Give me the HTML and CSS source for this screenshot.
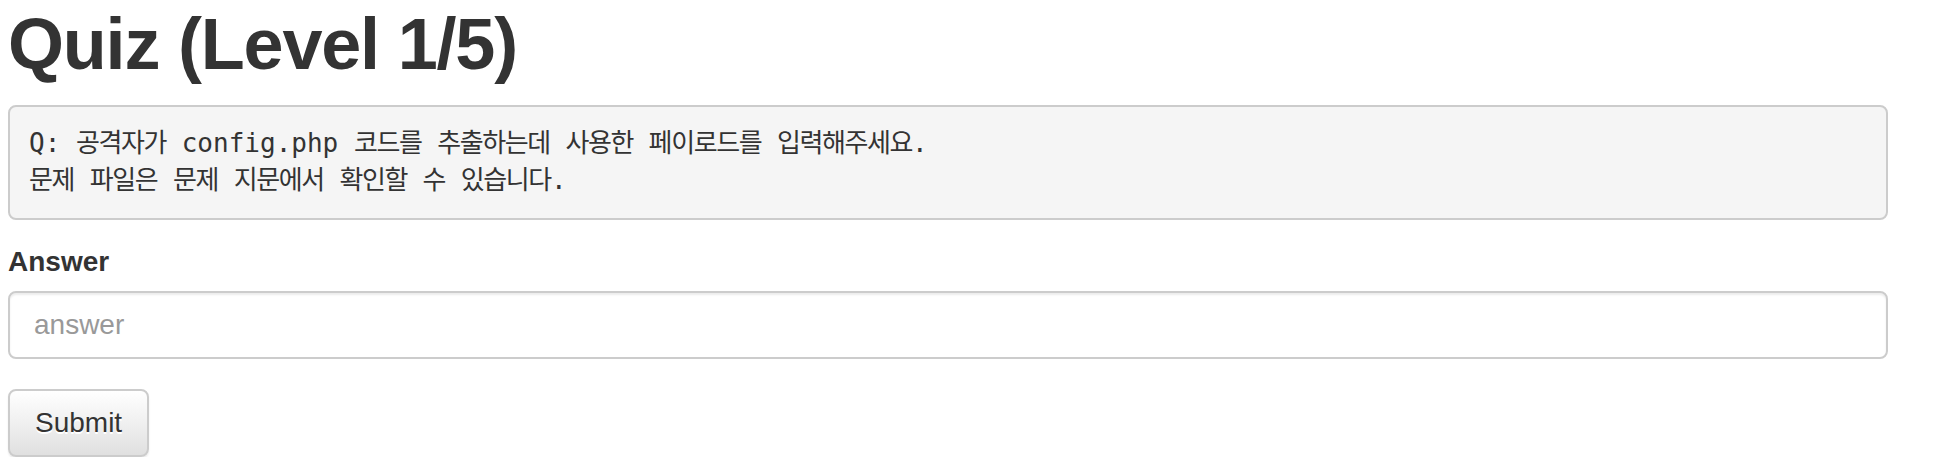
FILE: index.html
```html
<!DOCTYPE html>
<html lang="ko">
<head>
<meta charset="utf-8">
<title>Quiz</title>
<link rel="stylesheet" href="styles.css">
</head>
<body>
<div class="container">
  <h1 class="title">Quiz (Level 1/5)</h1>
  <pre class="question">Q: <span class="ko">공격자가</span> config.php <span class="ko">코드를</span> <span class="ko">추출하는데</span> <span class="ko">사용한</span> <span class="ko">페이로드를</span> <span class="ko">입력해주세요</span>.
<span class="ko">문제</span> <span class="ko">파일은</span> <span class="ko">문제</span> <span class="ko">지문에서</span> <span class="ko">확인할</span> <span class="ko">수</span> <span class="ko">있습니다</span>.</pre>
  <form class="quiz-form" onsubmit="return false;">
    <div class="form-group">
      <label class="label" for="answer">Answer</label>
      <input class="input" id="answer" type="text" placeholder="answer">
    </div>
    <button class="btn" type="submit">Submit</button>
  </form>
</div>
</body>
</html>
```

FILE: styles.css
```css
html, body {
  margin: 0;
  padding: 0;
  background: #fff;
}

body {
  font-family: "Liberation Sans", Arial, sans-serif;
  color: #333;
  font-size: 28px;
  line-height: 40px;
}

.container {
  width: 1880px;
  margin-left: 8px;
}

.title {
  margin: 5px 0 21px;
  font-size: 72px;
  line-height: 79px;
  font-weight: 700;
  letter-spacing: -1.2px;
  color: #333;
}

.question {
  margin: 0 0 22px;
  padding: 18px 19px 19px;
  background: #f5f5f5;
  border: 2px solid #ccc;
  border-radius: 8px;
  font-family: "DejaVu Sans Mono", "Noto Sans CJK KR", monospace;
  font-size: 26px;
  line-height: 37px;
  color: #333;
  white-space: pre-wrap;
}

.ko {
  font-family: "Noto Sans CJK KR", sans-serif;
  line-height: 26px;
  letter-spacing: -1.4px;
}

.quiz-form {
  margin: 0;
}

.form-group {
  margin-bottom: 30px;
}

.label {
  display: block;
  font-weight: 700;
  line-height: 40px;
  margin-bottom: 9px;
}

.input {
  display: block;
  box-sizing: border-box;
  width: 100%;
  height: 68px;
  margin: 0;
  padding: 12px 24px;
  border: 2px solid #ccc;
  border-radius: 8px;
  box-shadow: inset 0 2px 2px rgba(0, 0, 0, 0.075);
  font-family: "Liberation Sans", Arial, sans-serif;
  font-size: 28px;
  line-height: 40px;
  color: #555;
  background: #fff;
  outline: none;
}

.input::placeholder {
  color: #999;
}

.btn {
  display: block;
  box-sizing: border-box;
  height: 68px;
  margin: 0;
  padding: 12px 25px;
  border: 2px solid #ccc;
  border-radius: 8px;
  background: linear-gradient(to bottom, #fff 0%, #e0e0e0 100%);
  box-shadow: inset 0 2px 0 rgba(255, 255, 255, 0.15), 0 2px 2px rgba(0, 0, 0, 0.075);
  text-shadow: 0 2px 0 #fff;
  font-family: "Liberation Sans", Arial, sans-serif;
  font-size: 28px;
  line-height: 40px;
  color: #333;
  cursor: pointer;
}
```
